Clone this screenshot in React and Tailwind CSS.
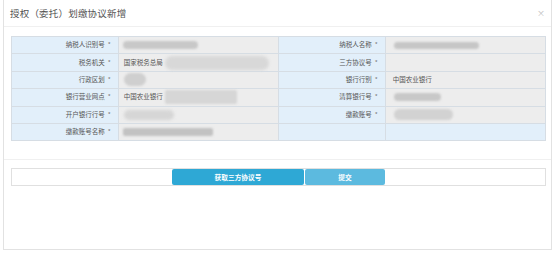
import React from "react";

const font = { fontFamily: '"Noto Sans CJK SC", "Noto Sans", sans-serif' };

function Label({ children }) {
  return (
    <td className="w-[20%] bg-[#e2effa] border border-[#d6dde4] text-right pr-[7px] text-[6.5px] text-[#555] whitespace-nowrap">
      {children}
      {children ? <span className="ml-[3px] text-[#777]">*</span> : null}
    </td>
  );
}

function Value({ children, blue }) {
  return (
    <td
      className={
        "w-[30%] border border-[#d6dde4] pl-[5px] text-[6.5px] text-[#555] " +
        (blue ? "bg-[#e2effa]" : "bg-[#ededed]")
      }
    >
      <div className="flex items-center gap-[1px] h-full">{children}</div>
    </td>
  );
}

export default function App() {
  return (
    <div className="w-[552px] h-[258px] bg-white overflow-hidden" style={font}>
      <div className="ml-[3px] h-[250px] border-l border-r border-b border-[#e2e2e2] flex flex-col">
        {/* 标题栏 */}
        <div className="h-[27px] border-b border-[#f0f0f0] flex items-center justify-between pl-[6px] pr-[6px]">
          <span className="text-[9.5px] text-[#555] tracking-[0.2px]">授权（委托）划缴协议新增</span>
          <span className="text-[8px] text-[#bbb] leading-none">×</span>
        </div>

        {/* 表单 */}
        <div className="pt-[9px] pl-[7px] pr-[5px] pb-[18px] border-b border-[#f0f0f0]">
          <table className="w-full border-collapse border border-[#d6dde4] table-fixed">
            <tbody>
              <tr className="h-[17.4px]">
                <Label>纳税人识别号</Label>
                <Value>
                  <div className="ml-[-1px] w-[75px] h-[8px] rounded-full bg-[#c8c8c8] blur-[1.2px]" />
                </Value>
                <Label>纳税人名称</Label>
                <Value>
                  <div className="ml-[3px] w-[85px] h-[7px] rounded-full bg-[#c6c6c6] blur-[1.2px]" />
                </Value>
              </tr>
              <tr className="h-[17.4px]">
                <Label>税务机关</Label>
                <Value>
                  <span>国家税务总局</span>
                  <div className="ml-[1px] w-[104px] h-[14px] rounded-full bg-[#d8d8d8] blur-[1.5px]" />
                </Value>
                <Label>三方协议号</Label>
                <Value />
              </tr>
              <tr className="h-[17.4px]">
                <Label>行政区划</Label>
                <Value>
                  <div className="w-[22px] h-[13px] rounded-full bg-[#cfcfcf] blur-[1.2px]" />
                </Value>
                <Label>银行行别</Label>
                <Value>
                  <span className="ml-[2px]">中国农业银行</span>
                </Value>
              </tr>
              <tr className="h-[17.4px]">
                <Label>银行营业网点</Label>
                <Value>
                  <span>中国农业银行</span>
                  <div className="ml-[1px] w-[72px] h-[14px] rounded-[2px] bg-[#d6d6d6] blur-[0.8px]" />
                </Value>
                <Label>清算银行号</Label>
                <Value>
                  <div className="ml-[3px] w-[47px] h-[8px] rounded-full bg-[#c8c8c8] blur-[1.2px]" />
                </Value>
              </tr>
              <tr className="h-[17.4px]">
                <Label>开户银行行号</Label>
                <Value>
                  <div className="w-[50px] h-[10px] rounded-full bg-[#d6d6d6] blur-[1.5px]" />
                </Value>
                <Label>缴款账号</Label>
                <Value>
                  <div className="ml-[3px] w-[59px] h-[11px] rounded-full bg-[#d2d2d2] blur-[1.2px]" />
                </Value>
              </tr>
              <tr className="h-[17.4px]">
                <Label>缴款账号名称</Label>
                <Value>
                  <div className="ml-[-1px] w-[90px] h-[8px] rounded-[2px] bg-[#c2c2c2] blur-[1px]" />
                </Value>
                <td className="bg-[#e2effa] border border-[#d6dde4]" />
                <Value blue />
              </tr>
            </tbody>
          </table>
        </div>

        {/* 按钮 */}
        <div className="pt-[8px] pl-[7px] pr-[5px]">
          <div className="h-[18px] border border-[#e0e0e0] bg-white flex justify-center items-stretch gap-[1px]">
            <button className="w-[132px] bg-[#2ea8d5] rounded-[2px] text-white text-[6.7px] font-bold">
              获取三方协议号
            </button>
            <button className="w-[80px] bg-[#5cbadf] rounded-[2px] text-white text-[6.7px] font-bold">
              提交
            </button>
          </div>
        </div>
      </div>
    </div>
  );
}
